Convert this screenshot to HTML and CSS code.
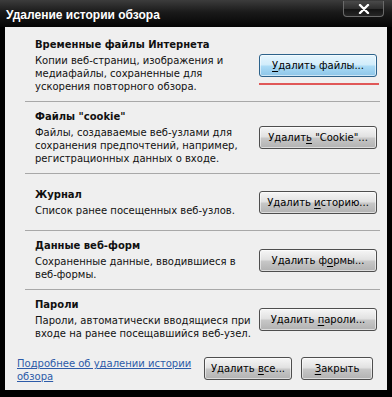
FILE: index.html
```html
<!DOCTYPE html>
<html lang="ru">
<head>
    <meta charset="UTF-8">
    <title>Удаление истории обзора</title>
    <link rel="stylesheet" href="styles.css">
</head>
<body>
    <div class="window">
        <div class="titlebar">
            <span class="title">Удаление истории обзора</span>
            <button class="close-btn" aria-label="Закрыть">
                <svg width="14" height="10" viewBox="0 0 14 10">
                    <path d="M3 1 L11 9 M11 1 L3 9" stroke="#fff" stroke-width="2.4" stroke-linecap="round"/>
                </svg>
            </button>
        </div>

        <div class="content">
            <div class="sections">
                <div class="section">
                    <div class="section-text">
                        <h3>Временные файлы Интернета</h3>
                        <p>Копии веб-страниц, изображения и<br>медиафайлы, сохраненные для<br>ускорения повторного обзора.</p>
                    </div>
                    <button class="btn btn-active"><u>У</u>далить файлы...</button>
                </div>
                <div class="section">
                    <div class="section-text">
                        <h3>Файлы "cookie"</h3>
                        <p>Файлы, создаваемые веб-узлами для<br>сохранения предпочтений, например,<br>регистрационных данных о входе.</p>
                    </div>
                    <button class="btn">Удалит<u>ь</u> "Cookie"...</button>
                </div>
                <div class="section">
                    <div class="section-text">
                        <h3>Журнал</h3>
                        <p>Список ранее посещенных веб-узлов.</p>
                    </div>
                    <button class="btn">Удалить <u>и</u>сторию...</button>
                </div>
                <div class="section">
                    <div class="section-text">
                        <h3>Данные веб-форм</h3>
                        <p>Сохраненные данные, вводившиеся в<br>веб-формы.</p>
                    </div>
                    <button class="btn">Удалить ф<u>о</u>рмы...</button>
                </div>
                <div class="section">
                    <div class="section-text">
                        <h3>Пароли</h3>
                        <p>Пароли, автоматически вводящиеся при<br>входе на ранее посещавшийся веб-узел.</p>
                    </div>
                    <button class="btn">Удалить <u>п</u>ароли...</button>
                </div>
            </div>

            <div class="footer">
                <a href="#" class="help-link">Подробнее об удалении истории<br>обзора</a>
                <div class="footer-btns">
                    <button class="btn btn-all">Удалить <u>в</u>се...</button>
                    <button class="btn btn-close"><u>З</u>акрыть</button>
                </div>
            </div>
        </div>
    </div>
</body>
</html>
```

FILE: styles.css
```css
* {
    margin: 0;
    padding: 0;
    box-sizing: border-box;
}

body {
    background: #000;
    font-family: 'DejaVu Sans', Tahoma, Verdana, sans-serif;
    font-size: 10px;
    color: #111;
}

.window {
    width: 392px;
    height: 397px;
    display: flex;
    flex-direction: column;
    padding-bottom: 7px;
    background: #000;
}

.titlebar {
    height: 27px;
    display: flex;
    align-items: flex-start;
    justify-content: space-between;
    background: linear-gradient(#3c3c3c 0%, #1a1a1a 45%, #050505 100%);
}

.title {
    font-family: 'Liberation Sans', Arial, sans-serif;
    font-weight: bold;
    font-size: 12px;
    color: #fff;
    margin: 8px 0 0 6px;
}

.close-btn {
    width: 41px;
    height: 16px;
    margin: 1px 8px 0 0;
    border: 1px solid #6a6a6a;
    border-top: none;
    border-radius: 0 0 4px 4px;
    background: linear-gradient(#4a4a4a 0%, #2e2e2e 50%, #121212 51%, #262626 100%);
    display: flex;
    align-items: center;
    justify-content: center;
}

.content {
    flex: 1;
    margin: 0 5px;
    background: #efefef;
    padding-top: 3px;
}

.sections {
    margin: 0 7px 0 20px;
}

.section {
    display: flex;
    align-items: center;
    min-height: 57px;
    padding: 8px 3px 8px 10px;
}

.section + .section {
    border-top: 1px solid #a8a8a8;
}

.section-text {
    flex: 1;
}

.section-text h3 {
    font-size: 10px;
    font-weight: bold;
    line-height: 13px;
    margin-bottom: 3px;
}

.section-text p {
    line-height: 13px;
    white-space: nowrap;
}

.btn {
    position: relative;
    width: 118px;
    height: 23px;
    font-family: inherit;
    font-size: 10px;
    color: #000;
    border: 1px solid #4e4e4e;
    border-radius: 3px;
    background: linear-gradient(#f6f6f6 0%, #e2e2e2 45%, #c6c6c6 55%, #b2b2b2 100%);
    box-shadow: inset 0 0 0 1px rgba(255, 255, 255, 0.55);
}

.btn u {
    text-decoration-thickness: 1px;
    text-underline-offset: 2px;
}

.btn-active {
    border-color: #2c628b;
    background: linear-gradient(#e6f5fd 0%, #d2edfb 45%, #a9daf5 55%, #8dc5e8 100%);
}

.btn-active::after {
    content: '';
    position: absolute;
    left: -1px;
    right: -3px;
    bottom: -9px;
    height: 2px;
    background: #e05858;
}

.footer {
    display: flex;
    align-items: flex-start;
    margin-top: 9px;
    padding: 0 14px 0 12px;
}

.help-link {
    color: #2d5ba8;
    line-height: 13px;
    text-decoration: underline;
}

.footer-btns {
    margin-left: auto;
    display: flex;
    gap: 9px;
}

.btn-all {
    width: 88px;
}

.btn-close {
    width: 72px;
}
```
